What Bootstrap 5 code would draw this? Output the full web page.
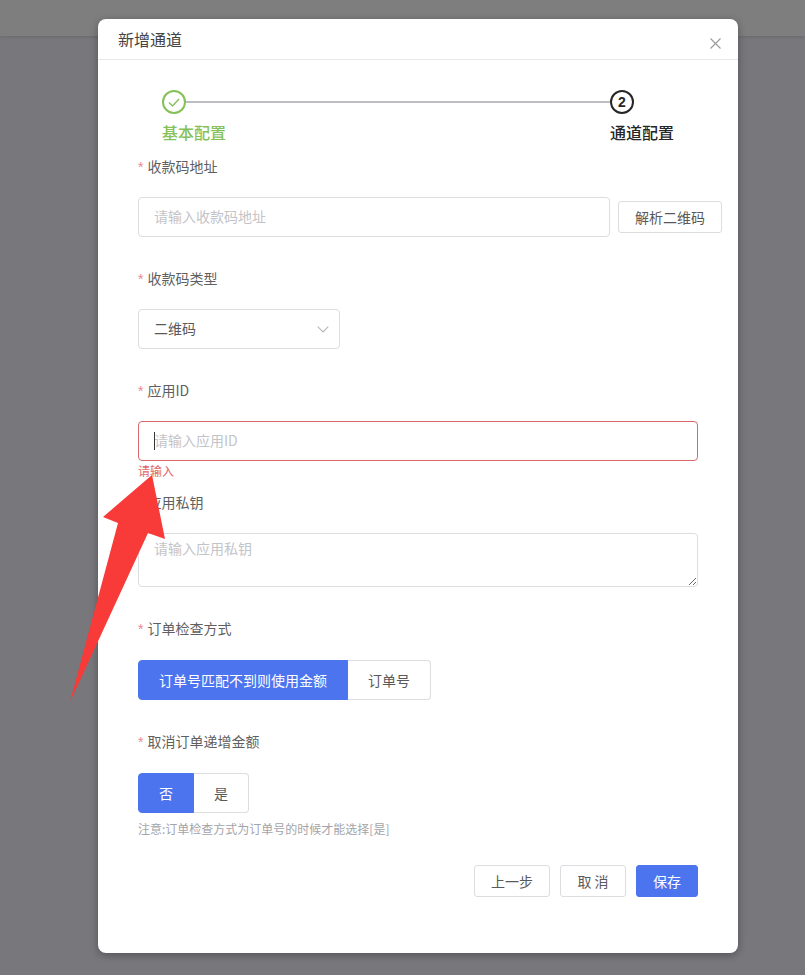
<!DOCTYPE html>
<html lang="zh-CN">
<head>
<meta charset="utf-8">
<title>新增通道</title>
<link href="https://cdn.jsdelivr.net/npm/bootstrap@5.3.0/dist/css/bootstrap.min.css" rel="stylesheet">
<style>
html,body{height:975px;overflow:hidden}
body{background:#77777c;font-family:"Noto Sans CJK SC","Liberation Sans",sans-serif;font-size:14px;color:#595959}
.page-strip{position:absolute;left:0;top:0;right:0;height:36px;background:#7e7e7e;box-shadow:0 1px 3px rgba(0,0,0,.12)}
.dlg{position:relative;width:640px;height:934px;margin:19px 0 0 98px;background:#fff;border:0;border-radius:8px;box-shadow:0 2px 8px rgba(0,0,0,.3)}
.dlg-head{height:41px;padding:0 20px;border-bottom:1px solid #e8e8e8;font-size:16px;line-height:41px;color:#444}
.dlg-close{width:11px;height:11px;margin:19px -3px 0 0;color:#999}
.steps{width:472px;margin:30px 0 0 64px;height:65px}
.step-dot{width:24px;height:24px;flex:none}
.step-line{height:2px;background:#bdbec3}
.step-labels{font-size:16px;line-height:24px;margin-top:6px;font-weight:500}
.ok{color:#86c157}.cur{color:#262626}
.step-name{margin-right:-40px}
.form-zone{padding:0 40px}
.fld-label{height:22px;line-height:22px;font-size:14px;color:#5f5f5f;margin-bottom:20px}
.fld-label.wide{margin-bottom:21px}
.req{color:#e98a8f;margin-right:4px;font-size:14px;font-family:"Liberation Sans",sans-serif}
.form-control.fc,.form-select.fc{height:40px;border:1px solid #dcdde0;border-radius:4px;padding:0 15px 2px;font-size:14px;color:#595959;box-shadow:none}
.fc::placeholder{color:#c3c4c8;opacity:1}
.gap-a{margin-bottom:30px}
.addr{width:472px}
.parse-btn{width:104px;height:32px;margin:0 -24px 0 8px;padding:0;font-size:14px;line-height:30px;border:1px solid #dcdde0;border-radius:3px;color:#595959;background:#fff}
.type-sel{width:202px;--bs-form-select-bg-img:none;background-image:none}
.sel-wrap{position:relative;width:202px}
.sel-caret{position:absolute;right:11px;top:17px;width:12px;height:7px;color:#b5b6ba}
.form-control.fc.is-err{border-color:#d9686c;background-image:none}
.cursor-bar{position:absolute;left:16px;top:11px;width:1px;height:18px;background:#333}
.err-txt{font-size:12px;line-height:20px;color:#e0666b;margin-bottom:10px;height:20px}
.form-control.fc.ta{height:54px;padding-top:3px;line-height:22px;resize:vertical}
.seg .btn{height:40px;padding:0;font-size:14px;line-height:38px;border:1px solid #dcdde0;background:#fff;color:#595959;border-radius:4px}
.seg .btn.on{background:#4b74ee;border-color:#4b74ee;color:#fff}
.btn-group.seg>.btn.on+.btn.btn{margin-left:0;border-left:0}
.seg-a1{width:210px}.seg-a2{width:83px}.seg-b1{width:56px}.seg-b2{width:55px}
.note{font-size:12px;line-height:20px;color:#a3a4a8;margin-top:6px}
.foot{margin-top:26px;gap:10px}
.foot .btn{height:32px;padding:0;font-size:14px;line-height:30px;border:1px solid #dcdde0;border-radius:3px;background:#fff;color:#595959}
.foot .btn.on{background:#4b74ee;border-color:#4b74ee;color:#fff}
.f1{width:76px}.f2{width:66px}.f3{width:62px}
.arrow{position:absolute;left:0;top:0;width:805px;height:975px;pointer-events:none}
</style>
</head>
<body>
<div class="page-strip"></div>
<div class="dlg modal-content d-block">
  <div class="dlg-head d-flex justify-content-between">
    <span>新增通道</span>
    <svg class="dlg-close" viewBox="0 0 11 11" fill="none" stroke="currentColor" stroke-width="1.1"><path d="M.5.5l10 10M10.5.5l-10 10"/></svg>
  </div>
  <div class="steps">
    <div class="d-flex align-items-center">
      <svg class="step-dot" viewBox="0 0 24 24" fill="none" stroke="#86c157"><circle cx="12" cy="12" r="11" stroke-width="2"/><path d="M7 12.5l3.5 3.5 6.5-7" stroke-width="1.4"/></svg>
      <div class="step-line flex-grow-1"></div>
      <svg class="step-dot" viewBox="0 0 24 24"><circle cx="12" cy="12" r="11" fill="#fff" stroke="#262626" stroke-width="2"/><text x="12" y="17" text-anchor="middle" font-size="14" font-weight="700" fill="#262626" font-family="Liberation Sans, sans-serif">2</text></svg>
    </div>
    <div class="step-labels d-flex justify-content-between">
      <span class="ok">基本配置</span>
      <span class="cur step-name">通道配置</span>
    </div>
  </div>
  <form class="form-zone">
    <div class="gap-a">
      <div class="fld-label"><span class="req">*</span>收款码地址</div>
      <div class="d-flex align-items-center">
        <input class="form-control fc addr flex-shrink-0" type="text" placeholder="请输入收款码地址">
        <button type="button" class="btn parse-btn flex-shrink-0">解析二维码</button>
      </div>
    </div>
    <div class="gap-a">
      <div class="fld-label"><span class="req">*</span>收款码类型</div>
      <div class="sel-wrap">
        <select class="form-select fc type-sel"><option>二维码</option></select>
        <svg class="sel-caret" viewBox="0 0 12 7" fill="none" stroke="currentColor" stroke-width="1.1"><path d="M.7.7L6 6l5.3-5.3"/></svg>
      </div>
    </div>
    <div>
      <div class="fld-label"><span class="req">*</span>应用ID</div>
      <div class="position-relative">
        <input class="form-control fc is-err" type="text" placeholder="请输入应用ID">
        <span class="cursor-bar"></span>
      </div>
      <div class="err-txt">请输入</div>
    </div>
    <div class="gap-a">
      <div class="fld-label"><span class="req">*</span>应用私钥</div>
      <textarea class="form-control fc ta" placeholder="请输入应用私钥"></textarea>
    </div>
    <div class="gap-a">
      <div class="fld-label wide"><span class="req">*</span>订单检查方式</div>
      <div class="btn-group seg" role="group">
        <button type="button" class="btn on seg-a1">订单号匹配不到则使用金额</button>
        <button type="button" class="btn seg-a2">订单号</button>
      </div>
    </div>
    <div>
      <div class="fld-label wide"><span class="req">*</span>取消订单递增金额</div>
      <div class="btn-group seg" role="group">
        <button type="button" class="btn on seg-b1">否</button>
        <button type="button" class="btn seg-b2">是</button>
      </div>
      <div class="note">注意:订单检查方式为订单号的时候才能选择[是]</div>
    </div>
    <div class="foot d-flex justify-content-end">
      <button type="button" class="btn f1">上一步</button>
      <button type="button" class="btn f2">取 消</button>
      <button type="button" class="btn on f3">保存</button>
    </div>
  </form>
</div>
<svg class="arrow" viewBox="0 0 805 975"><polygon points="152,475 103,517 118,523 70,702 148,533 165,539" fill="#f83a38"/></svg>
<script src="https://cdn.jsdelivr.net/npm/bootstrap@5.3.0/dist/js/bootstrap.bundle.min.js"></script>
</body>
</html>
